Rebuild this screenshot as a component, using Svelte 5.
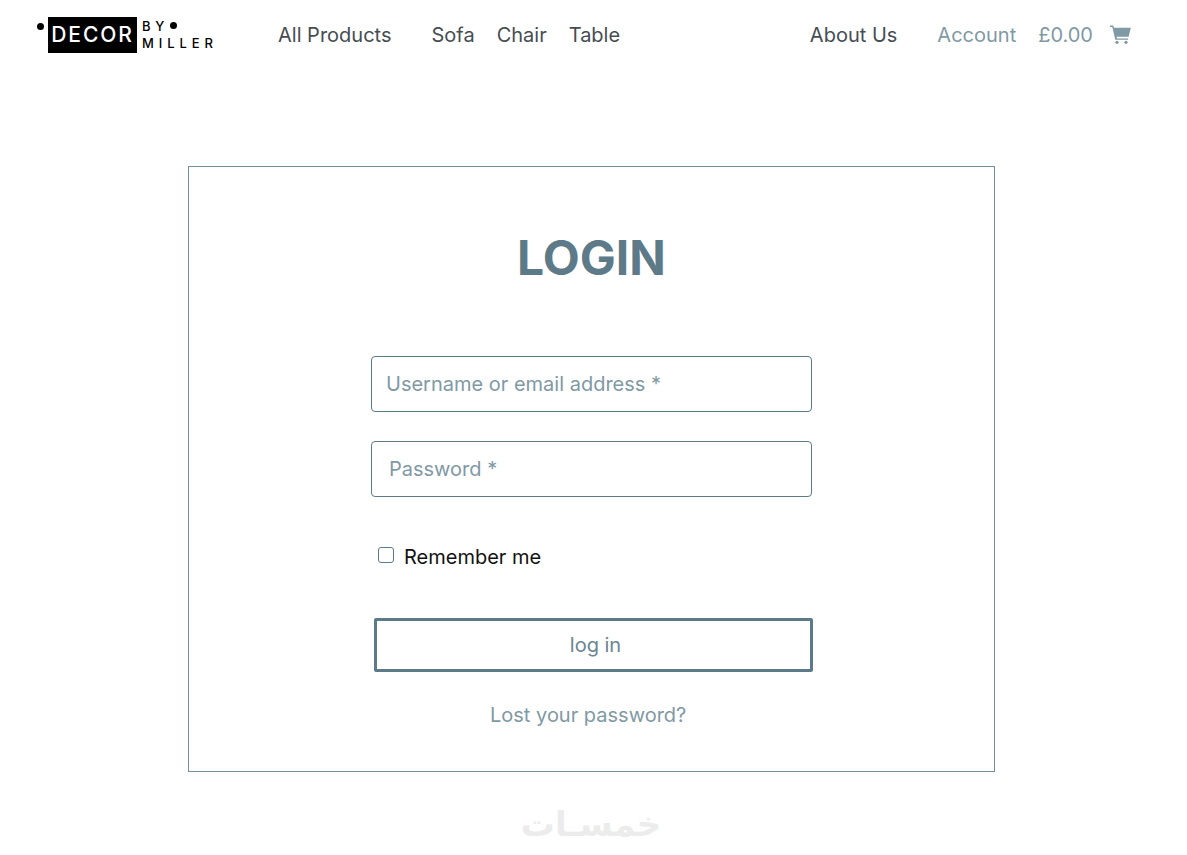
<script>
	const nav_links = ['Sofa', 'Chair', 'Table'];
</script>

<header class="navbar">
	<a href="/" class="logo">
		<span class="logo_dot"></span>
		<span class="logo_box">DECOR</span>
		<span class="logo_side">
			<span class="logo_by">BY<span class="logo_dot small"></span></span>
			<span class="logo_miller">MILLER</span>
		</span>
	</a>
	<nav class="main_nav">
		<a href="/" class="all_products">All Products</a>
		{#each nav_links as link}
			<a href="/">{link}</a>
		{/each}
	</nav>
	<div class="right_nav">
		<a href="/" class="about">About Us</a>
		<a href="/" class="muted account">Account</a>
		<a href="/" class="muted price">£0.00</a>
		<svg class="cart" viewBox="0 0 21 19" aria-hidden="true">
			<path d="M0 0.500h3.200l0.800 2.300h16.800l-2.200 9h-12l0.500 1.700h11v1.300H5.300L2.300 1.900H0z" />
			<circle cx="7" cy="17.300" r="1.600" />
			<circle cx="16" cy="17.300" r="1.600" />
		</svg>
	</div>
</header>

<main class="card">
	<h1>LOGIN</h1>
	<form class="login_form">
		<input class="field first" type="text" placeholder="Username or email address *" />
		<input class="field second" type="password" placeholder="Password *" />
		<label class="remember">
			<input type="checkbox" />
			<span>Remember me</span>
		</label>
		<button type="button" class="submit">log in</button>
		<a href="/" class="lost">Lost your password?</a>
	</form>
</main>

<div class="watermark" dir="rtl">خمسـات</div>

<style>
	:global(body) {
		background: #fff;
		font-family: Inter, 'Liberation Sans', sans-serif;
		color: #454d52;
	}

	a {
		color: inherit;
		text-decoration: none;
	}

	.navbar {
		display: flex;
		align-items: center;
		height: 70px;
		font-size: 20px;
		padding-left: 37px;
	}

	.logo {
		display: flex;
		align-items: center;
		width: 177px;
		color: #000;
	}

	.logo_dot {
		flex-shrink: 0;
		width: 7px;
		height: 7px;
		border-radius: 50%;
		background: #000;
		margin: -17px 4px 0 0;
	}

	.logo_dot.small {
		display: inline-block;
		margin: 0 0 0 1px;
		vertical-align: 2px;
	}

	.logo_box {
		flex-shrink: 0;
		width: 89px;
		height: 36px;
		background: #000;
		color: #fff;
		font-size: 21px;
		font-weight: 500;
		letter-spacing: 1.900px;
		line-height: 36px;
		text-align: center;
		white-space: nowrap;
	}

	.logo_side {
		display: flex;
		flex-direction: column;
		flex-shrink: 0;
		margin-left: 5px;
		font-size: 13px;
		font-weight: 500;
		line-height: 17px;
		letter-spacing: 4.800px;
		white-space: nowrap;
	}

	.logo_miller {
		letter-spacing: 4.900px;
	}

	.main_nav {
		display: flex;
		margin-left: 64px;
		gap: 22px;
	}

	.all_products {
		margin-right: 18px;
	}

	.right_nav {
		display: flex;
		align-items: center;
		margin-left: auto;
		padding-right: 56px;
	}

	.muted {
		color: #7f99a5;
	}

	.about {
		margin-right: 40px;
	}

	.account {
		margin-right: 22px;
	}

	.cart {
		width: 21px;
		height: 19px;
		fill: #7f99a5;
		margin-left: 17px;
		margin-top: -2px;
	}

	.card {
		box-sizing: border-box;
		width: 807px;
		height: 606px;
		margin: 96px 0 0 188px;
		border: 1px solid #73909c;
		padding-top: 61px;
	}

	h1 {
		margin: 0;
		text-align: center;
		color: #5c7a88;
		font-size: 48px;
		font-weight: 700;
		line-height: 60px;
	}

	.login_form {
		display: flex;
		flex-direction: column;
		width: 441px;
		margin: 68px 0 0 182px;
	}

	.field {
		box-sizing: border-box;
		width: 441px;
		height: 56px;
		border: 1px solid #5c7a88;
		border-radius: 4px;
		background: #fff;
		font-family: inherit;
		font-size: 20px;
		outline: none;
	}

	.field::placeholder {
		color: #7f99a5;
		opacity: 1;
	}

	.first {
		padding-left: 14px;
	}

	.second {
		padding-left: 17px;
		margin-top: 29px;
	}

	.remember {
		display: flex;
		align-items: center;
		margin: 44px 0 0 7px;
		color: #111;
		font-size: 20px;
		line-height: 32px;
	}

	.remember input {
		appearance: none;
		box-sizing: border-box;
		width: 16px;
		height: 16px;
		margin: -4px 10px 0 0;
		border: 1px solid #5c7a88;
		border-radius: 3px;
		background: #fff;
	}

	.submit {
		box-sizing: border-box;
		width: 439px;
		height: 54px;
		margin: 45px 0 0 3px;
		padding: 0 0 0 4px;
		border: 3px solid #5c7a88;
		border-radius: 2px;
		background: #fff;
		color: #6a8693;
		font-family: inherit;
		font-size: 20px;
	}

	.lost {
		align-self: flex-start;
		margin: 29px 0 0 119px;
		color: #7f99a5;
		font-size: 20px;
		line-height: 28px;
	}

	.watermark {
		width: 806px;
		margin-left: 188px;
		margin-top: 24px;
		text-align: center;
		color: #ececec;
		font-family: 'DejaVu Sans', sans-serif;
		font-size: 34px;
		font-weight: 700;
		line-height: 56px;
	}
</style>
